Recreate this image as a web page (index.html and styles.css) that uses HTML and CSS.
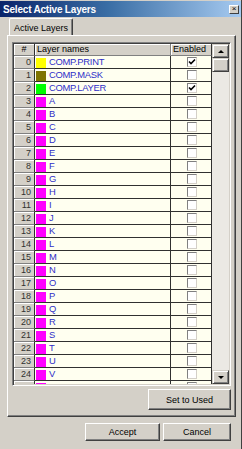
FILE: index.html
```html
<!DOCTYPE html>
<html>
<head>
<meta charset="utf-8">
<link rel="stylesheet" href="styles.css">
</head>
<body>
<div class="win">
  <div class="titlebar">
    <span class="title">Select Active Layers</span>
    <span class="close">&#215;</span>
  </div>
  <div class="content">
    <div class="tabs"><div class="tab">Active Layers</div></div>
    <div class="panel">
      <div class="grid">
        <div class="cells">
          <div class="r h"><div class="c num">#</div><div class="c name">Layer names</div><div class="c en">Enabled</div></div>
          <div class="r"><div class="c num">0</div><div class="c name"><i class="sw" style="background:#ffff00"></i><span>COMP.PRINT</span></div><div class="c en"><b class="cb"><svg width="8" height="8" viewBox="0 0 8 8"><path d="M1 3.5 L3 5.5 L7 1.5" fill="none" stroke="#000" stroke-width="1.6"/></svg></b></div></div>
          <div class="r"><div class="c num">1</div><div class="c name"><i class="sw" style="background:#7f7400"></i><span>COMP.MASK</span></div><div class="c en"><b class="cb"></b></div></div>
          <div class="r"><div class="c num">2</div><div class="c name"><i class="sw" style="background:#00ff00"></i><span>COMP.LAYER</span></div><div class="c en"><b class="cb"><svg width="8" height="8" viewBox="0 0 8 8"><path d="M1 3.5 L3 5.5 L7 1.5" fill="none" stroke="#000" stroke-width="1.6"/></svg></b></div></div>
          <div class="r"><div class="c num">3</div><div class="c name"><i class="sw m"></i><span>A</span></div><div class="c en"><b class="cb"></b></div></div>
          <div class="r"><div class="c num">4</div><div class="c name"><i class="sw m"></i><span>B</span></div><div class="c en"><b class="cb"></b></div></div>
          <div class="r"><div class="c num">5</div><div class="c name"><i class="sw m"></i><span>C</span></div><div class="c en"><b class="cb"></b></div></div>
          <div class="r"><div class="c num">6</div><div class="c name"><i class="sw m"></i><span>D</span></div><div class="c en"><b class="cb"></b></div></div>
          <div class="r"><div class="c num">7</div><div class="c name"><i class="sw m"></i><span>E</span></div><div class="c en"><b class="cb"></b></div></div>
          <div class="r"><div class="c num">8</div><div class="c name"><i class="sw m"></i><span>F</span></div><div class="c en"><b class="cb"></b></div></div>
          <div class="r"><div class="c num">9</div><div class="c name"><i class="sw m"></i><span>G</span></div><div class="c en"><b class="cb"></b></div></div>
          <div class="r"><div class="c num">10</div><div class="c name"><i class="sw m"></i><span>H</span></div><div class="c en"><b class="cb"></b></div></div>
          <div class="r"><div class="c num">11</div><div class="c name"><i class="sw m"></i><span>I</span></div><div class="c en"><b class="cb"></b></div></div>
          <div class="r"><div class="c num">12</div><div class="c name"><i class="sw m"></i><span>J</span></div><div class="c en"><b class="cb"></b></div></div>
          <div class="r"><div class="c num">13</div><div class="c name"><i class="sw m"></i><span>K</span></div><div class="c en"><b class="cb"></b></div></div>
          <div class="r"><div class="c num">14</div><div class="c name"><i class="sw m"></i><span>L</span></div><div class="c en"><b class="cb"></b></div></div>
          <div class="r"><div class="c num">15</div><div class="c name"><i class="sw m"></i><span>M</span></div><div class="c en"><b class="cb"></b></div></div>
          <div class="r"><div class="c num">16</div><div class="c name"><i class="sw m"></i><span>N</span></div><div class="c en"><b class="cb"></b></div></div>
          <div class="r"><div class="c num">17</div><div class="c name"><i class="sw m"></i><span>O</span></div><div class="c en"><b class="cb"></b></div></div>
          <div class="r"><div class="c num">18</div><div class="c name"><i class="sw m"></i><span>P</span></div><div class="c en"><b class="cb"></b></div></div>
          <div class="r"><div class="c num">19</div><div class="c name"><i class="sw m"></i><span>Q</span></div><div class="c en"><b class="cb"></b></div></div>
          <div class="r"><div class="c num">20</div><div class="c name"><i class="sw m"></i><span>R</span></div><div class="c en"><b class="cb"></b></div></div>
          <div class="r"><div class="c num">21</div><div class="c name"><i class="sw m"></i><span>S</span></div><div class="c en"><b class="cb"></b></div></div>
          <div class="r"><div class="c num">22</div><div class="c name"><i class="sw m"></i><span>T</span></div><div class="c en"><b class="cb"></b></div></div>
          <div class="r"><div class="c num">23</div><div class="c name"><i class="sw m"></i><span>U</span></div><div class="c en"><b class="cb"></b></div></div>
          <div class="r"><div class="c num">24</div><div class="c name"><i class="sw m"></i><span>V</span></div><div class="c en"><b class="cb"></b></div></div>
          <div class="r"><div class="c num">25</div><div class="c name"><i class="sw m"></i><span>W</span></div><div class="c en"><b class="cb"></b></div></div>
        </div>
        <div class="vscroll">
          <div class="sbtn"><span class="arrow up"></span></div>
          <div class="thumb"></div>
          <div class="track"></div>
          <div class="sbtn"><span class="arrow down"></span></div>
        </div>
      </div>
      <div class="panel-actions"><button class="btn used">Set to Used</button></div>
    </div>
    <div class="footer">
      <button class="btn accept">Accept</button>
      <button class="btn cancel">Cancel</button>
    </div>
  </div>
</div>
</body>
</html>
```
FILE: styles.css
```css
* { box-sizing: border-box; }
html, body {
  margin: 0;
  padding: 0;
}
body {
  width: 242px;
  height: 449px;
  overflow: hidden;
  background: #d4d0c8;
  font-family: "Liberation Sans", Arial, sans-serif;
  font-size: 9px;
  color: #000;
}
.win {
  width: 242px;
  height: 449px;
  border-right: 1px solid #404040;
  display: flex;
  flex-direction: column;
}
.titlebar {
  margin-top: 1px;
  height: 16px;
  background: linear-gradient(to right, #0a246a 0%, #3a6ea5 45%, #a6caf0 100%);
  display: flex;
  align-items: center;
  justify-content: space-between;
  padding: 0 2px 0 3px;
}
.title {
  color: #fff;
  font-weight: bold;
  font-size: 10px;
  letter-spacing: -0.2px;
}
.close {
  width: 10px;
  height: 9px;
  background: #d4d0c8;
  border-top: 1px solid #fff;
  border-left: 1px solid #fff;
  border-right: 1px solid #404040;
  border-bottom: 1px solid #404040;
  font-size: 8px;
  line-height: 6px;
  text-align: center;
  color: #000;
}
.content {
  flex: 1;
  display: flex;
  flex-direction: column;
  padding: 1px 5px 0 7px;
}
.tabs {
  display: flex;
  padding-left: 2px;
  height: 17px;
}
.tab {
  width: 64px;
  height: 17px;
  border-top: 1px solid #fff;
  border-left: 1px solid #fff;
  border-right: 1px solid #404040;
  border-radius: 2px 2px 0 0;
  box-shadow: inset -1px 0 0 #808080;
  padding: 4px 0 0 4px;
  line-height: 11px;
  background: #d4d0c8;
}
.panel {
  height: 382px;
  border-top: 1px solid #fff;
  border-left: 1px solid #fff;
  border-right: 1px solid #404040;
  border-bottom: 1px solid #404040;
  box-shadow: inset -1px -1px 0 #808080;
  padding: 6px 0 0 4px;
  display: flex;
  flex-direction: column;
}
.grid {
  width: 219px;
  height: 344px;
  border-top: 1px solid #808080;
  border-left: 1px solid #808080;
  border-right: 1px solid #fff;
  border-bottom: 1px solid #fff;
  box-shadow: inset 1px 1px 0 #404040, inset -1px -1px 0 #d4d0c8;
  padding: 1px;
  display: flex;
  overflow: hidden;
}
.cells {
  width: 198px;
  overflow: hidden;
  background: #d4d0c8;
}
.r {
  display: flex;
  height: 13px;
}
.r.h { height: 12px; }
.c {
  height: 100%;
  border-right: 1px solid #303030;
  border-bottom: 1px solid #303030;
  line-height: 12px;
  white-space: nowrap;
  overflow: hidden;
}
.num {
  width: 21px;
  background: #d4d0c8;
  text-align: right;
  padding-right: 3px;
  color: #303030;
  border-bottom-color: #808080;
  box-shadow: inset 1px 1px 0 #fff;
}
.name {
  width: 136px;
  background: #fffff0;
  display: flex;
  align-items: flex-end;
  color: #2e2ec8;
  font-size: 9.4px;
  letter-spacing: -0.25px;
}
.name span {
  margin-left: 3px;
  align-self: center;
}
.en {
  width: 41px;
  background: #fffff0;
  display: flex;
  align-items: center;
  justify-content: center;
}
.r.h .c {
  background: #d4d0c8;
  color: #000;
  box-shadow: inset 1px 1px 0 #fff;
  border-bottom-color: #808080;
  border-right-color: #808080;
  line-height: 11px;
  font-size: 9px;
  letter-spacing: 0;
}
.r.h .num { text-align: center; padding: 0; border-right-color: #303030; }
.r.h .name { padding-left: 2px; align-items: center; color: #000; }
.r.h .en { justify-content: flex-start; padding-left: 2px; border-right-color: #303030; }
.sw {
  display: block;
  width: 10px;
  height: 10px;
  margin-left: 1px;
}
.sw.m { background: #ff00ff; }
.cb {
  display: flex;
  align-items: center;
  justify-content: center;
  width: 10px;
  height: 10px;
  margin-left: 1px;
  background: #fff;
  border-top: 1px solid #808080;
  border-left: 1px solid #808080;
  border-right: 1px solid #d4d0c8;
  border-bottom: 1px solid #d4d0c8;
}
.cb svg { display: block; }
.vscroll {
  width: 15px;
  flex: 1;
  display: flex;
  flex-direction: column;
  background: #ebe9e4;
}
.sbtn, .thumb {
  height: 14px;
  background: #d4d0c8;
  border-top: 1px solid #d4d0c8;
  border-left: 1px solid #d4d0c8;
  border-right: 1px solid #404040;
  border-bottom: 1px solid #404040;
  box-shadow: inset 1px 1px 0 #fff, inset -1px -1px 0 #808080;
  display: flex;
  align-items: center;
  justify-content: center;
}
.track { flex: 1; }
.arrow {
  width: 0;
  height: 0;
  border-left: 3px solid transparent;
  border-right: 3px solid transparent;
}
.arrow.up { border-bottom: 3px solid #000; }
.arrow.down { border-top: 3px solid #000; }
.panel-actions {
  display: flex;
  justify-content: flex-end;
  width: 219px;
  margin-top: 3px;
}
.btn {
  font-family: "Liberation Sans", Arial, sans-serif;
  font-size: 9px;
  color: #000;
  background: #d4d0c8;
  border-top: 1px solid #fff;
  border-left: 1px solid #fff;
  border-right: 1px solid #404040;
  border-bottom: 1px solid #404040;
  box-shadow: inset -1px -1px 0 #808080;
  padding: 0;
  margin: 0;
}
.used { width: 83px; height: 21px; }
.footer {
  display: flex;
  justify-content: flex-end;
  gap: 3px;
  margin-top: 6px;
  padding-right: 5px;
}
.accept { width: 75px; height: 18px; }
.cancel { width: 68px; height: 18px; }
```
